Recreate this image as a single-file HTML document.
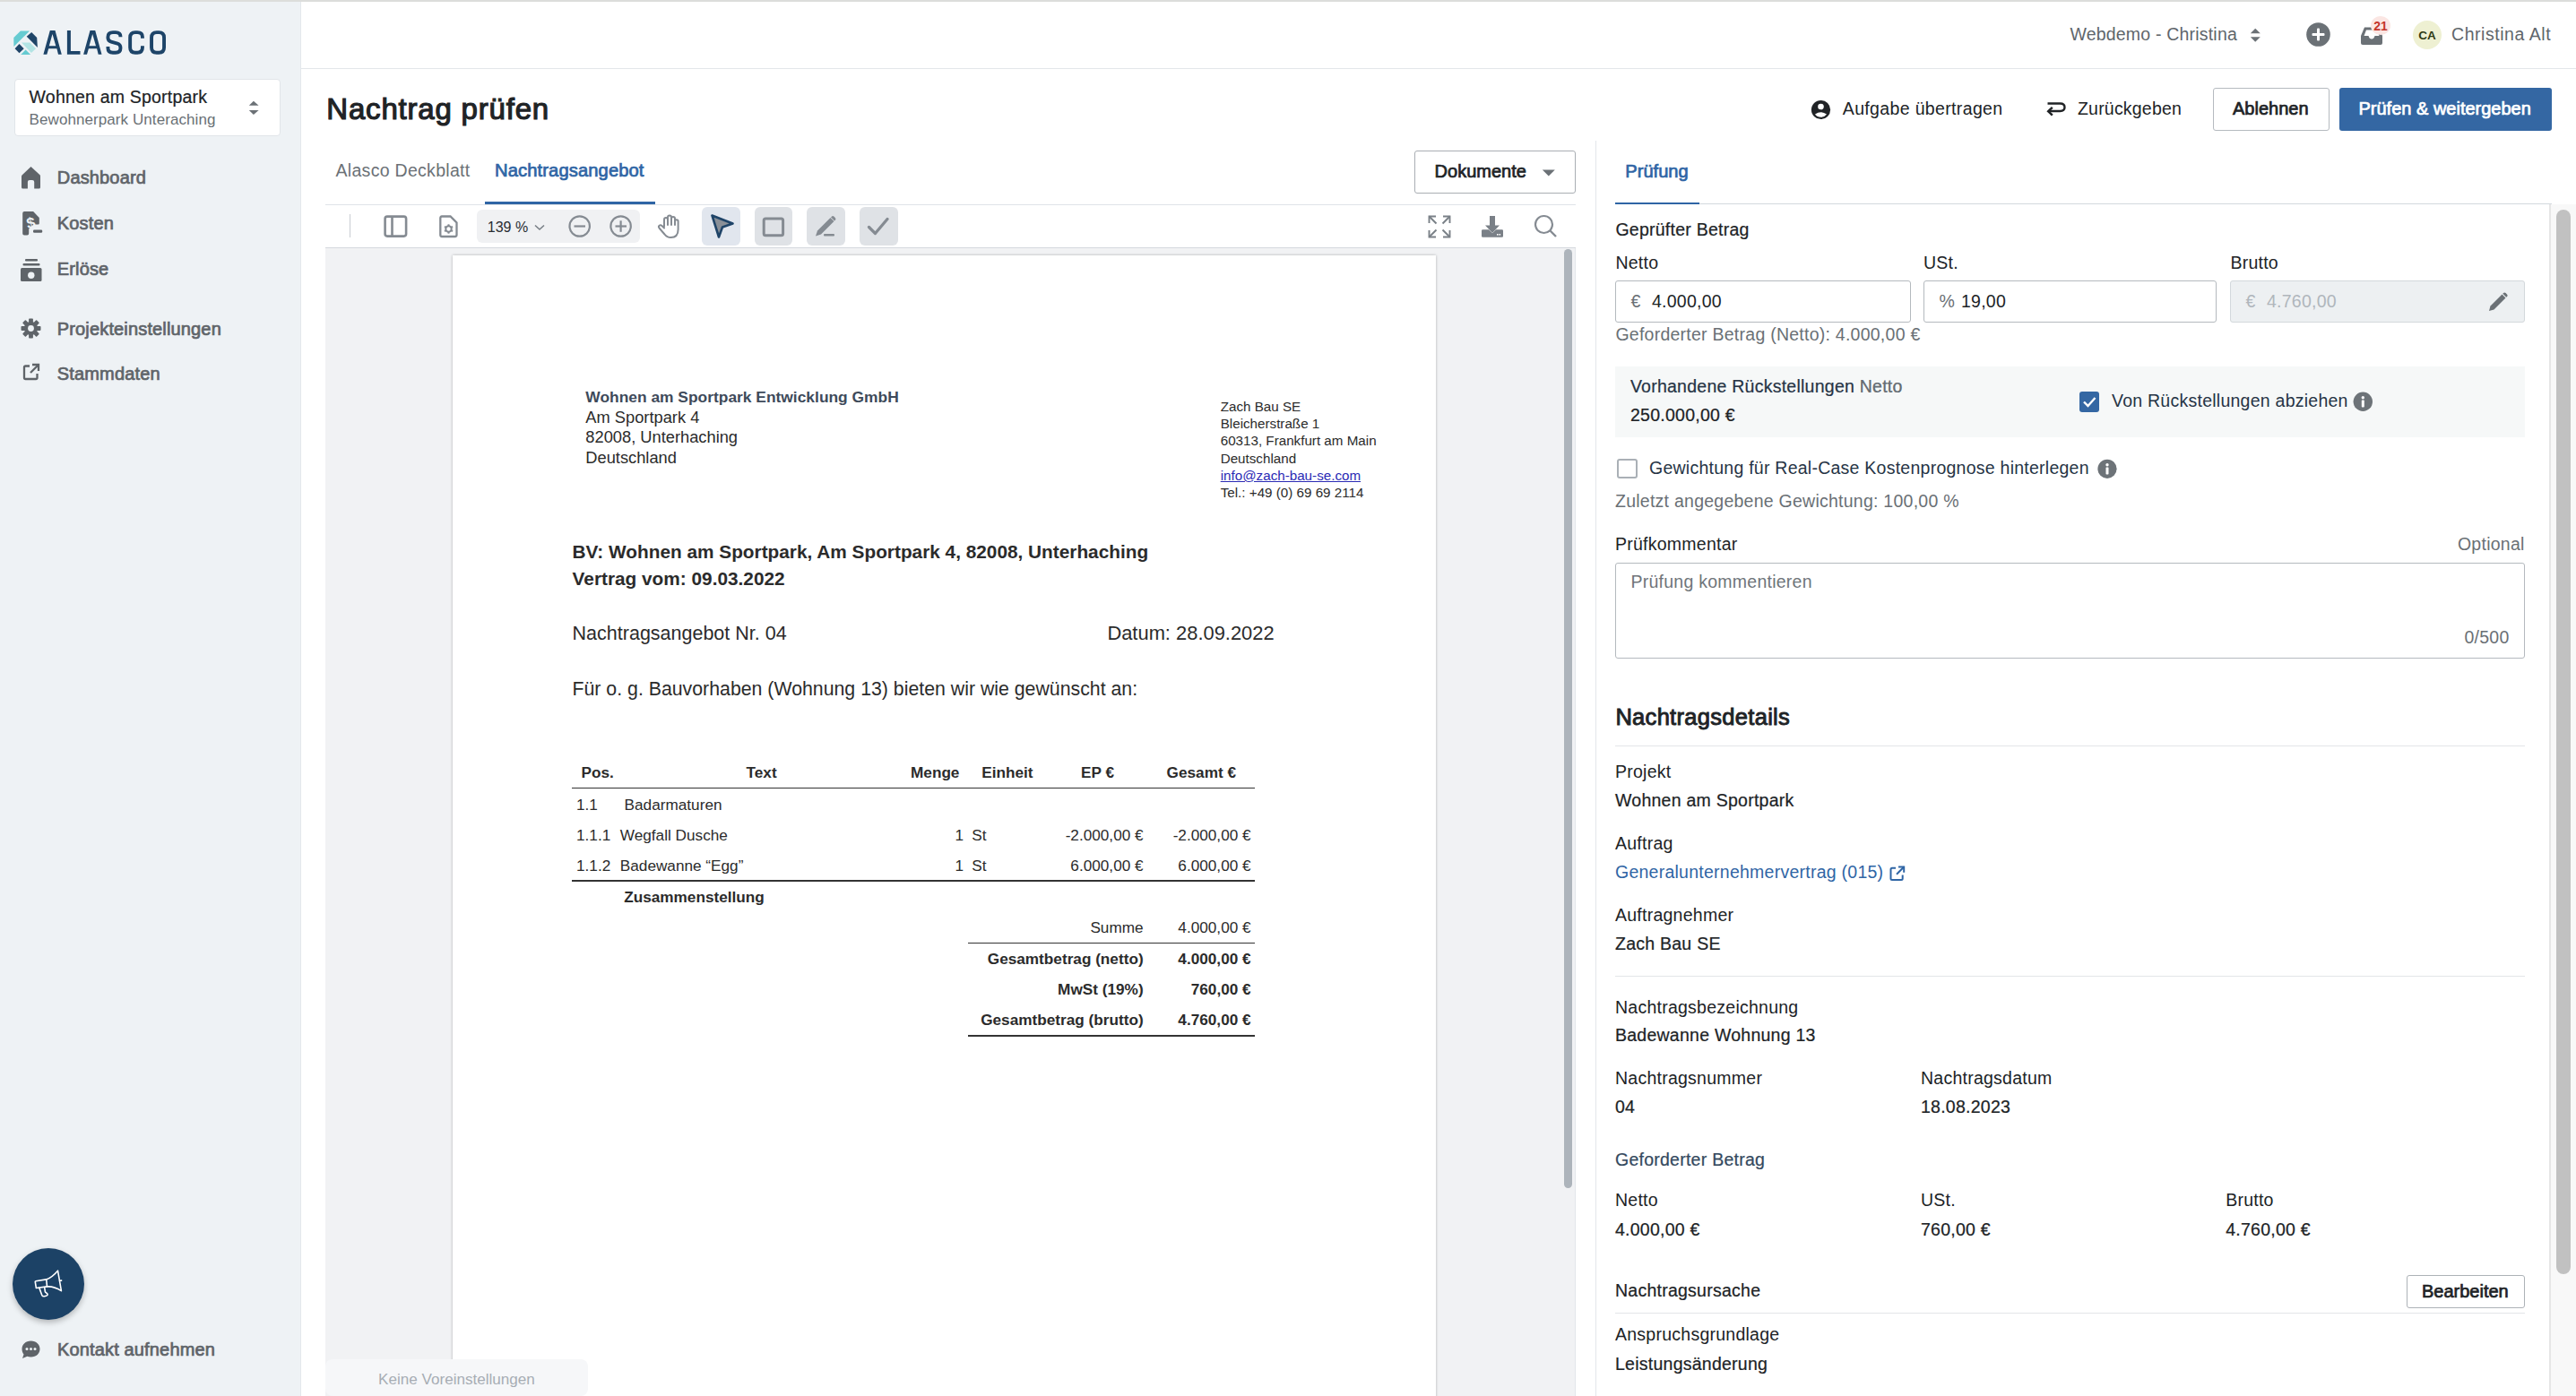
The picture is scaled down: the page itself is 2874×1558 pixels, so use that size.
<!DOCTYPE html>
<html><head><meta charset="utf-8"><title>Nachtrag prüfen</title>
<style>
html,body{margin:0;padding:0;}
html{overflow:hidden;}
body{width:2874px;height:1558px;position:relative;overflow:hidden;background:#ffffff;font-family:'Liberation Sans', sans-serif;}
.t{position:absolute;white-space:nowrap;line-height:1;}
svg{overflow:visible;}
</style></head><body>
<div style="position:absolute;left:0.00px;top:0.00px;width:2874.00px;height:2.00px;background:#dcdddb;border-radius:0px;"></div>
<div style="position:absolute;left:0.00px;top:2.00px;width:335.00px;height:1556.00px;background:#eef2f5;border-radius:0px;"></div>
<div style="position:absolute;left:335.00px;top:2.00px;width:1.00px;height:1556.00px;background:#e4e8ec;border-radius:0px;"></div>
<svg style="position:absolute;left:15.00px;top:33.70px;" width="28" height="28" viewBox="0 0 28 28">
<polygon points="7.9,0.4 18.1,0.4 0.4,18 0.3,7.9" fill="#66cbd1"/>
<polygon points="20.2,1.9 26.2,7.9 26.9,18.9 14.7,6.7" fill="#1f4568"/>
<polygon points="9,13.5 18.3,13.5 25.1,20.2 19.9,25.1" fill="#b3e4e4"/>
<polygon points="6.5,15 11.7,20.2 6.5,25.3 1.6,20.2" fill="#1f4568"/>
<polygon points="13.6,21.4 19.1,27.1 8.2,27.1" fill="#66cbd1"/>
</svg>
<svg style="position:absolute;left:0.00px;top:0.00px;" width="200" height="70" viewBox="0 0 200 70"><g fill="#1d4468">
<path fill-rule="evenodd" d="M48.4 60.7 L55.8 34.1 H61.5 L68.8 60.7 H65 L63.4 54.2 H54.2 L52.3 60.7 Z M54.8 51.2 H62.3 L58.5 37.9 Z"/>
<path d="M74.9 34.1 H78.9 V56.9 H89.5 V60.7 H74.9 Z"/>
<path fill-rule="evenodd" d="M93.1 60.7 L100.5 34.1 H106.2 L113.5 60.7 H109.7 L108.1 54.2 H98.9 L97 60.7 Z M99.5 51.2 H107 L103.2 37.9 Z"/></g>
<g fill="none" stroke="#1d4468" stroke-width="3.9">
<path d="M134.45 41.2 V40.8 Q134.45 36.15 129 36.15 H126 Q120.45 36.15 120.45 41.2 V42.2 Q120.45 45.6 124 46.6 L131 48.5 Q134.45 49.6 134.45 53.2 V53.8 Q134.45 58.75 129 58.75 H126 Q120.45 58.75 120.45 53.8 V52.1"/>
<path d="M158.95 42.7 V41.2 Q158.95 36.15 153.2 36.15 H150.9 Q145.15 36.15 145.15 41.9 V53 Q145.15 58.75 150.9 58.75 H153.2 Q158.95 58.75 158.95 53 V51.2"/>
<path d="M169.05 41.9 Q169.05 36.15 174.8 36.15 H177.3 Q183.05 36.15 183.05 41.9 V53 Q183.05 58.75 177.3 58.75 H174.8 Q169.05 58.75 169.05 53 Z"/></g></svg>
<div style="position:absolute;left:15.70px;top:88.00px;width:297.30px;height:64.20px;background:#ffffff;border:1px solid #e1e5e9;box-sizing:border-box;border-radius:4px;"></div>
<div class="t" style="left:32.60px;top:98.94px;font-size:19.5px;color:#202326;font-weight:400;letter-spacing:0.2px;font-family:'Liberation Sans', sans-serif;-webkit-text-stroke:0.22px #202326;">Wohnen am Sportpark</div>
<div class="t" style="left:32.60px;top:124.76px;font-size:17px;color:#6a7075;font-weight:400;letter-spacing:0.08px;font-family:'Liberation Sans', sans-serif;">Bewohnerpark Unteraching</div>
<svg style="position:absolute;left:277.00px;top:112.00px;" width="12" height="17" viewBox="0 0 12 17"><polygon points="0.8,5.8 5.9,0.8 11.6,5.8" fill="#6b7176"/><polygon points="0.8,10.9 11.6,10.9 5.9,16" fill="#6b7176"/></svg>
<div class="t" style="left:63.80px;top:188.02px;font-size:20px;color:#5f6469;font-weight:400;letter-spacing:0.15px;font-family:'Liberation Sans', sans-serif;-webkit-text-stroke:0.72px #5f6469;">Dashboard</div>
<div class="t" style="left:63.80px;top:238.52px;font-size:20px;color:#5f6469;font-weight:400;letter-spacing:0.15px;font-family:'Liberation Sans', sans-serif;-webkit-text-stroke:0.72px #5f6469;">Kosten</div>
<div class="t" style="left:63.80px;top:289.52px;font-size:20px;color:#5f6469;font-weight:400;letter-spacing:0.15px;font-family:'Liberation Sans', sans-serif;-webkit-text-stroke:0.72px #5f6469;">Erlöse</div>
<div class="t" style="left:63.80px;top:356.52px;font-size:20px;color:#5f6469;font-weight:400;letter-spacing:0.15px;font-family:'Liberation Sans', sans-serif;-webkit-text-stroke:0.72px #5f6469;">Projekteinstellungen</div>
<div class="t" style="left:63.80px;top:406.52px;font-size:20px;color:#5f6469;font-weight:400;letter-spacing:0.15px;font-family:'Liberation Sans', sans-serif;-webkit-text-stroke:0.72px #5f6469;">Stammdaten</div>
<svg style="position:absolute;left:23.00px;top:185.00px;" width="23" height="27" viewBox="0 0 23 27"><path d="M11.5 1 L21.8 10.5 Q22 11 22 12 V24 Q22 25.6 20.5 25.6 H15.2 V18 Q15.2 16 13 16 H10 Q7.9 16 7.9 18 V25.6 H2.5 Q1 25.6 1 24 V12 Q1 11 1.5 10.5 Z" fill="#5f6469"/></svg>
<svg style="position:absolute;left:18.00px;top:230.00px;" width="36" height="36" viewBox="0 0 36 36"><path d="M7.2 8.1 Q7.2 6.1 9.2 6.1 H19.1 L25.8 12.9 V19.3 Q25.8 20.6 24.5 20.6 H19.5 L14.2 25.5 V30.6 Q14.2 32.5 12.3 32.5 H9.1 Q7.2 32.5 7.2 30.6 Z" fill="#5f6469"/>
<rect x="19" y="26.6" width="10.2" height="3.1" rx="1.2" fill="#5f6469"/>
<text x="11.3" y="24.6" font-size="17" font-weight="700" fill="#eef2f5" font-family="Liberation Sans" transform="rotate(-12 16 17)">$</text></svg>
<svg style="position:absolute;left:22.00px;top:288.00px;" width="26" height="27" viewBox="0 0 26 27"><rect x="6" y="1" width="14" height="2.6" rx="1" fill="#5f6469"/>
<rect x="3.5" y="6" width="19" height="2.6" rx="1" fill="#5f6469"/>
<path d="M1 12.5 Q1 11 2.5 11 H23 Q24.5 11 24.5 12.5 V24.5 Q24.5 26 23 26 H2.5 Q1 26 1 24.5 Z" fill="#5f6469"/>
<circle cx="12.8" cy="19.2" r="3.7" fill="#eef2f5"/></svg>
<svg style="position:absolute;left:23.00px;top:355.00px;" width="23" height="23" viewBox="0 0 23 23"><g transform="translate(11.5,11.5)">
<circle r="7.6" fill="#5f6469"/>
<rect x="-2.4" y="-11" width="4.8" height="5" rx="0.8" fill="#5f6469" transform="rotate(0)"/><rect x="-2.4" y="-11" width="4.8" height="5" rx="0.8" fill="#5f6469" transform="rotate(45)"/><rect x="-2.4" y="-11" width="4.8" height="5" rx="0.8" fill="#5f6469" transform="rotate(90)"/><rect x="-2.4" y="-11" width="4.8" height="5" rx="0.8" fill="#5f6469" transform="rotate(135)"/><rect x="-2.4" y="-11" width="4.8" height="5" rx="0.8" fill="#5f6469" transform="rotate(180)"/><rect x="-2.4" y="-11" width="4.8" height="5" rx="0.8" fill="#5f6469" transform="rotate(225)"/><rect x="-2.4" y="-11" width="4.8" height="5" rx="0.8" fill="#5f6469" transform="rotate(270)"/><rect x="-2.4" y="-11" width="4.8" height="5" rx="0.8" fill="#5f6469" transform="rotate(315)"/>
<circle r="3.4" fill="#eef2f5"/></g></svg>
<svg style="position:absolute;left:25.00px;top:405.00px;" width="20" height="20" viewBox="0 0 20 20"><path d="M8 3.5 H3.5 Q2 3.5 2 5 V16.5 Q2 18 3.5 18 H15 Q16.5 18 16.5 16.5 V12" fill="none" stroke="#5f6469" stroke-width="2.3"/>
<path d="M11 2 H18 V9" fill="none" stroke="#5f6469" stroke-width="2.3"/><path d="M18 2 L9 11" stroke="#5f6469" stroke-width="2.3"/></svg>
<div style="position:absolute;left:14px;top:1393px;width:80px;height:80px;border-radius:50%;background:#1c4266;box-shadow:0 3px 6px rgba(0,0,0,0.25)"></div>
<svg style="position:absolute;left:36.00px;top:1414.00px;" width="36" height="36" viewBox="0 0 36 36"><g fill="none" stroke="#ffffff" stroke-width="1.6" stroke-linejoin="round" stroke-linecap="round">
<path d="M4.4 23.5 L3.3 16.8 Q3.1 15.9 4 15.8 L15.7 13.9 Q22 11.8 28.5 4.2 L32.4 26.6 Q24 21.3 16.5 21.9 Z"/><path d="M15.7 13.9 L16.5 21.9"/><path d="M7.8 23.4 L10.7 31.3 Q11.6 33.2 13.6 32.7 L16.2 31.9 Q17.6 31.2 16.8 29.9 L14.4 27.8 L13.7 22.9"/><path d="M30.6 15.3 L32.6 15.1"/></g></svg>
<svg style="position:absolute;left:23.00px;top:1495.00px;" width="23" height="22" viewBox="0 0 23 22"><path d="M11.5 1.5 C17.5 1.5 21.5 5.5 21.5 10.5 C21.5 15.5 17.5 19.5 11.5 19.5 C10 19.5 8.6 19.2 7.4 18.8 L2 21 L3.5 16.5 C2.2 14.9 1.5 12.8 1.5 10.5 C1.5 5.5 5.5 1.5 11.5 1.5 Z" fill="#5f6469"/><circle cx="7" cy="10.5" r="1.5" fill="#eef2f5"/><circle cx="11.5" cy="10.5" r="1.5" fill="#eef2f5"/><circle cx="16" cy="10.5" r="1.5" fill="#eef2f5"/></svg>
<div class="t" style="left:64.00px;top:1495.52px;font-size:20px;color:#5f6469;font-weight:400;letter-spacing:0.15px;font-family:'Liberation Sans', sans-serif;-webkit-text-stroke:0.72px #5f6469;">Kontakt aufnehmen</div>
<div style="position:absolute;left:336.00px;top:76.00px;width:2538.00px;height:1.00px;background:#e3e6ea;border-radius:0px;"></div>
<div class="t" style="left:2309.40px;top:28.94px;font-size:19.5px;color:#60666b;font-weight:400;letter-spacing:0.2px;font-family:'Liberation Sans', sans-serif;">Webdemo - Christina</div>
<svg style="position:absolute;left:2510.00px;top:31.00px;" width="13" height="17" viewBox="0 0 13 17"><polygon points="0.8,6.3 6.2,0.8 11.8,6.3" fill="#6b7176"/><polygon points="0.8,10.3 11.8,10.3 6.2,15.8" fill="#6b7176"/></svg>
<svg style="position:absolute;left:2573.00px;top:25.40px;" width="27" height="27" viewBox="0 0 27 27"><circle cx="13.5" cy="13.5" r="13.3" fill="#6b7176"/><rect x="12" y="6.5" width="3" height="14" rx="1" fill="#fff"/><rect x="6.5" y="12" width="14" height="3" rx="1" fill="#fff"/></svg>
<svg style="position:absolute;left:2633.00px;top:29.00px;" width="26" height="22" viewBox="0 0 26 22"><path d="M5 1.5 H21 L25 11 V19 Q25 21 23 21 H3 Q1 21 1 19 V11 Z" fill="#6b7176"/><path d="M4.5 11 L7 4.5 H19 L21.5 11 H16.5 Q15.5 14.5 13 14.5 Q10.5 14.5 9.5 11 Z" fill="#ffffff"/></svg>
<div style="position:absolute;left:2645px;top:18px;width:22px;height:21px;border-radius:50%;background:#fbe6e3"></div>
<div class="t" style="left:1906.00px;width:1500px;text-align:center;top:21.70px;font-size:14px;color:#c4352b;font-weight:700;letter-spacing:0px;font-family:'Liberation Sans', sans-serif;">21</div>
<div style="position:absolute;left:2692px;top:22.8px;width:32px;height:32px;border-radius:50%;background:#eef0d2"></div>
<div class="t" style="left:1958.00px;width:1500px;text-align:center;top:33.02px;font-size:13.5px;color:#2f3a12;font-weight:700;letter-spacing:0px;font-family:'Liberation Sans', sans-serif;">CA</div>
<div class="t" style="left:2735.00px;top:28.94px;font-size:19.5px;color:#60666b;font-weight:400;letter-spacing:0.55px;font-family:'Liberation Sans', sans-serif;">Christina Alt</div>
<div class="t" style="left:364.30px;top:105.31px;font-size:33px;color:#1f2326;font-weight:400;letter-spacing:0.8px;font-family:'Liberation Sans', sans-serif;-webkit-text-stroke:1.19px #1f2326;">Nachtrag prüfen</div>
<svg style="position:absolute;left:2020.00px;top:110.50px;" width="23" height="23" viewBox="0 0 23 23"><circle cx="11.5" cy="11.5" r="10.6" fill="#202326"/><circle cx="11.5" cy="8" r="3.3" fill="#fff"/><path d="M5 16.5 Q11.5 12 18 16.5 Q15.5 19.8 11.5 19.8 Q7.5 19.8 5 16.5 Z" fill="#fff"/></svg>
<div class="t" style="left:2055.80px;top:111.94px;font-size:19.5px;color:#202326;font-weight:400;letter-spacing:0.35px;font-family:'Liberation Sans', sans-serif;">Aufgabe übertragen</div>
<svg style="position:absolute;left:2282.00px;top:112.00px;" width="24" height="20" viewBox="0 0 24 20"><path d="M2.5 3.5 H16.5 Q21.5 3.5 21.5 7.8 Q21.5 12 16.5 12 H4" fill="none" stroke="#202326" stroke-width="2.4"/><path d="M7.8 7.8 L3.2 12.2 L7.8 16.6" fill="none" stroke="#202326" stroke-width="2.5"/></svg>
<div class="t" style="left:2318.00px;top:111.94px;font-size:19.5px;color:#202326;font-weight:400;letter-spacing:0.2px;font-family:'Liberation Sans', sans-serif;">Zurückgeben</div>
<div style="position:absolute;left:2468.50px;top:98.30px;width:130.50px;height:47.30px;background:#ffffff;border:1px solid #b5babf;box-sizing:border-box;border-radius:3px;"></div>
<div class="t" style="left:2491.00px;top:110.92px;font-size:20px;color:#202326;font-weight:400;letter-spacing:0px;font-family:'Liberation Sans', sans-serif;-webkit-text-stroke:0.72px #202326;">Ablehnen</div>
<div style="position:absolute;left:2610.00px;top:98.30px;width:237.00px;height:47.30px;background:#3467a3;border-radius:3px;"></div>
<div class="t" style="left:2631.50px;top:110.92px;font-size:20px;color:#ffffff;font-weight:400;letter-spacing:0px;font-family:'Liberation Sans', sans-serif;-webkit-text-stroke:0.72px #ffffff;">Prüfen &amp; weitergeben</div>
<div class="t" style="left:374.50px;top:180.94px;font-size:19.5px;color:#6b7176;font-weight:400;letter-spacing:0.3px;font-family:'Liberation Sans', sans-serif;">Alasco Deckblatt</div>
<div class="t" style="left:552.00px;top:180.35px;font-size:20.2px;color:#2f65a5;font-weight:400;letter-spacing:0.1px;font-family:'Liberation Sans', sans-serif;-webkit-text-stroke:0.73px #2f65a5;">Nachtragsangebot</div>
<div style="position:absolute;left:363.00px;top:228.00px;width:1395.00px;height:1.20px;background:#dfe3e8;border-radius:0px;"></div>
<div style="position:absolute;left:541.00px;top:225.40px;width:189.70px;height:2.60px;background:#2f65a5;border-radius:0px;"></div>
<div style="position:absolute;left:1578.20px;top:168.30px;width:179.60px;height:47.30px;background:#ffffff;border:1px solid #a9aeb3;box-sizing:border-box;border-radius:3px;"></div>
<div class="t" style="left:1600.60px;top:181.22px;font-size:20px;color:#202326;font-weight:400;letter-spacing:0px;font-family:'Liberation Sans', sans-serif;-webkit-text-stroke:0.72px #202326;">Dokumente</div>
<svg style="position:absolute;left:1720.00px;top:189.00px;" width="16" height="9" viewBox="0 0 16 9"><polygon points="0.8,0.6 14.8,0.6 7.8,7.6" fill="#6b7176"/></svg>
<div style="position:absolute;left:1780.00px;top:157.00px;width:1.00px;height:1401.00px;background:#e3e6ea;border-radius:0px;"></div>
<div style="position:absolute;left:363.00px;top:276.00px;width:1395.00px;height:1.20px;background:#d5d9de;border-radius:0px;"></div>
<div style="position:absolute;left:390.00px;top:239.00px;width:1.20px;height:26.40px;background:#c9cdd2;border-radius:0px;"></div>
<svg style="position:absolute;left:428.00px;top:240.00px;" width="27" height="26" viewBox="0 0 27 26"><rect x="1.6" y="1.6" width="23.5" height="22" rx="2.5" fill="none" stroke="#858b92" stroke-width="2.6"/><line x1="9.5" y1="1.6" x2="9.5" y2="23.6" stroke="#858b92" stroke-width="2.6"/></svg>
<svg style="position:absolute;left:490.00px;top:240.00px;" width="22" height="26" viewBox="0 0 22 26"><path d="M3 1.5 H12.5 L19.5 8.5 V22 Q19.5 24 17.5 24 H3 Q1.3 24 1.3 22 V3.5 Q1.3 1.5 3 1.5 Z" fill="none" stroke="#858b92" stroke-width="2.3"/><g transform="translate(10.5,15.5)"><circle r="3.2" fill="none" stroke="#858b92" stroke-width="2"/><rect x="-1" y="-5.2" width="2" height="2.5" fill="#858b92" transform="rotate(0)"/><rect x="-1" y="-5.2" width="2" height="2.5" fill="#858b92" transform="rotate(60)"/><rect x="-1" y="-5.2" width="2" height="2.5" fill="#858b92" transform="rotate(120)"/><rect x="-1" y="-5.2" width="2" height="2.5" fill="#858b92" transform="rotate(180)"/><rect x="-1" y="-5.2" width="2" height="2.5" fill="#858b92" transform="rotate(240)"/><rect x="-1" y="-5.2" width="2" height="2.5" fill="#858b92" transform="rotate(300)"/></g></svg>
<div style="position:absolute;left:532.00px;top:234.30px;width:181.60px;height:36.30px;background:#f0f1f3;border-radius:6px;"></div>
<div class="t" style="left:543.80px;top:245.90px;font-size:16px;color:#2a2e33;font-weight:400;letter-spacing:0px;font-family:'Liberation Sans', sans-serif;">139 %</div>
<svg style="position:absolute;left:596.00px;top:250.00px;" width="12" height="8" viewBox="0 0 12 8"><path d="M1 1.5 L6 6 L11 1.5" fill="none" stroke="#7a8087" stroke-width="1.6"/></svg>
<svg style="position:absolute;left:634.00px;top:240.00px;" width="26" height="26" viewBox="0 0 26 26"><circle cx="12.7" cy="12.5" r="11.2" fill="none" stroke="#858b92" stroke-width="2.2"/><line x1="6.5" y1="12.5" x2="19" y2="12.5" stroke="#858b92" stroke-width="2.2"/></svg>
<svg style="position:absolute;left:680.00px;top:240.00px;" width="26" height="26" viewBox="0 0 26 26"><circle cx="12.6" cy="12.5" r="11.2" fill="none" stroke="#858b92" stroke-width="2.2"/><line x1="6.5" y1="12.5" x2="19" y2="12.5" stroke="#858b92" stroke-width="2.2"/><line x1="12.6" y1="6.3" x2="12.6" y2="18.8" stroke="#858b92" stroke-width="2.2"/></svg>
<svg style="position:absolute;left:733.00px;top:239.00px;" width="26" height="28" viewBox="0 0 26 28"><path d="M8 14 V6 Q8 4 10 4 Q12 4 12 6 V12 V3.5 Q12 1.5 14 1.5 Q16 1.5 16 3.5 V12 V5 Q16 3 18 3 Q20 3 20 5 V12 V8 Q20 6.3 21.8 6.3 Q23.6 6.3 23.6 8 V17 Q23.6 26 15.5 26 Q11 26 8.5 22.5 L2.5 15.5 Q1.3 14 2.6 12.8 Q4 11.7 5.5 13 L8 15.5" fill="none" stroke="#858b92" stroke-width="2" stroke-linejoin="round" stroke-linecap="round"/></svg>
<div style="position:absolute;left:783.00px;top:231.00px;width:43.00px;height:42.60px;background:#e1e6ee;border-radius:6px;"></div>
<svg style="position:absolute;left:790.00px;top:237.00px;" width="30" height="30" viewBox="0 0 30 30"><path d="M4.5 3.5 L27.5 12.5 L16 16.5 L12 27.5 Z" fill="#8a9098" stroke="#1f4468" stroke-width="2.6" stroke-linejoin="round"/></svg>
<div style="position:absolute;left:842.00px;top:231.00px;width:41.80px;height:42.60px;background:#dfe2e6;border-radius:6px;"></div>
<svg style="position:absolute;left:850.00px;top:241.50px;" width="26" height="23" viewBox="0 0 26 23"><rect x="2.2" y="2" width="21.4" height="18.8" rx="2" fill="none" stroke="#858b92" stroke-width="3"/></svg>
<div style="position:absolute;left:900.00px;top:231.00px;width:42.80px;height:42.60px;background:#dfe2e6;border-radius:6px;"></div>
<svg style="position:absolute;left:908.00px;top:239.00px;" width="26" height="28" viewBox="0 0 26 28"><path d="M2 24.5 L4 18.5 L18.5 4 L22.5 8 L8 22.5 Z" fill="#858b92"/><path d="M19.8 2.7 Q21.2 1.3 22.6 2.7 L23.8 3.9 Q25.2 5.3 23.8 6.7 L23 7.5 L19 3.5 Z" fill="#858b92"/><rect x="11" y="22" width="12" height="2.6" rx="1" fill="#858b92"/></svg>
<div style="position:absolute;left:959.00px;top:231.00px;width:42.60px;height:42.60px;background:#dfe2e6;border-radius:6px;"></div>
<svg style="position:absolute;left:967.00px;top:240.00px;" width="26" height="26" viewBox="0 0 26 26"><path d="M2.5 13.5 L9.5 20.5 L23 4.5" fill="none" stroke="#858b92" stroke-width="3.2" stroke-linecap="round" stroke-linejoin="round"/></svg>
<svg style="position:absolute;left:1593.00px;top:240.00px;" width="26" height="26" viewBox="0 0 26 26"><g stroke="#7a8087" stroke-width="1.9" fill="none"><path d="M1.5 9 V1.5 H9"/><path d="M1.5 1.5 L9.5 9.5"/><path d="M17 1.5 H24.5 V9"/><path d="M24.5 1.5 L16.5 9.5"/><path d="M1.5 17 V24.5 H9"/><path d="M1.5 24.5 L9.5 16.5"/><path d="M24.5 17 V24.5 H17"/><path d="M24.5 24.5 L16.5 16.5"/></g></svg>
<svg style="position:absolute;left:1652.00px;top:240.00px;" width="26" height="26" viewBox="0 0 26 26"><rect x="10" y="1" width="6" height="11" fill="#7a8087"/><polygon points="5,11.5 21,11.5 13,20" fill="#7a8087"/><path d="M1 17.5 Q1 16.3 2.2 16.3 H9 L13 20.3 L17 16.3 H23.8 Q25 16.3 25 17.5 V23.5 Q25 24.7 23.8 24.7 H2.2 Q1 24.7 1 23.5 Z" fill="#7a8087"/><rect x="18" y="21" width="1.6" height="1.6" fill="#fff"/><rect x="20.5" y="21" width="1.6" height="1.6" fill="#fff"/></svg>
<svg style="position:absolute;left:1711.00px;top:239.00px;" width="27" height="28" viewBox="0 0 27 28"><circle cx="11.5" cy="11.5" r="9.5" fill="none" stroke="#858b92" stroke-width="2.2"/><line x1="18.5" y1="18.5" x2="25" y2="25" stroke="#858b92" stroke-width="2.4"/></svg>
<div style="position:absolute;left:363.00px;top:277.20px;width:1395.00px;height:1280.80px;background:#f1f2f4;border-radius:0px;"></div>
<div style="position:absolute;left:504.50px;top:284.80px;width:1097.30px;height:1315.20px;background:#ffffff;border-radius:0px;box-shadow:0 0 3px rgba(0,0,0,0.28);"></div>
<div style="position:absolute;left:1745.00px;top:277.50px;width:9.20px;height:1048.70px;background:#adb4bb;border-radius:5px;"></div>
<div style="position:absolute;left:1757.00px;top:277.20px;width:1.00px;height:1280.80px;background:#e3e6ea;border-radius:0px;"></div>
<div style="position:absolute;left:363px;top:1517px;width:293px;height:41px;background:#f6f7f9;border-radius:8px"></div>
<div class="t" style="left:422.00px;top:1530.97px;font-size:17.1px;color:#a7adb4;font-weight:400;letter-spacing:0px;font-family:'Liberation Sans', sans-serif;">Keine Voreinstellungen</div>
<div class="t" style="left:653.30px;top:435.12px;font-size:17.4px;color:#3e4a5a;font-weight:700;letter-spacing:0px;font-family:'Liberation Sans', sans-serif;">Wohnen am Sportpark Entwicklung GmbH</div>
<div class="t" style="left:653.30px;top:457.16px;font-size:18.3px;color:#2b2b2b;font-weight:400;letter-spacing:0px;font-family:'Liberation Sans', sans-serif;">Am Sportpark 4</div>
<div class="t" style="left:653.30px;top:479.26px;font-size:18.3px;color:#2b2b2b;font-weight:400;letter-spacing:0px;font-family:'Liberation Sans', sans-serif;">82008, Unterhaching</div>
<div class="t" style="left:653.30px;top:501.96px;font-size:18.3px;color:#2b2b2b;font-weight:400;letter-spacing:0px;font-family:'Liberation Sans', sans-serif;">Deutschland</div>
<div class="t" style="left:1361.70px;top:446.08px;font-size:15.2px;color:#2b2b2b;font-weight:400;letter-spacing:0px;font-family:'Liberation Sans', sans-serif;">Zach Bau SE</div>
<div class="t" style="left:1361.70px;top:465.08px;font-size:15.2px;color:#2b2b2b;font-weight:400;letter-spacing:0px;font-family:'Liberation Sans', sans-serif;">Bleicherstraße 1</div>
<div class="t" style="left:1361.70px;top:484.38px;font-size:15.2px;color:#2b2b2b;font-weight:400;letter-spacing:0px;font-family:'Liberation Sans', sans-serif;">60313, Frankfurt am Main</div>
<div class="t" style="left:1361.70px;top:503.58px;font-size:15.2px;color:#2b2b2b;font-weight:400;letter-spacing:0px;font-family:'Liberation Sans', sans-serif;">Deutschland</div>
<div class="t" style="left:1361.70px;top:522.88px;font-size:15.2px;color:#2b2bb5;font-weight:400;letter-spacing:0px;font-family:'Liberation Sans', sans-serif;text-decoration:underline;">info@zach-bau-se.com</div>
<div class="t" style="left:1361.70px;top:541.58px;font-size:15.2px;color:#2b2b2b;font-weight:400;letter-spacing:0px;font-family:'Liberation Sans', sans-serif;">Tel.: +49 (0) 69 69 2114</div>
<div class="t" style="left:638.60px;top:605.94px;font-size:20.8px;color:#2b2b2b;font-weight:700;letter-spacing:0px;font-family:'Liberation Sans', sans-serif;">BV: Wohnen am Sportpark, Am Sportpark 4, 82008, Unterhaching</div>
<div class="t" style="left:638.60px;top:636.24px;font-size:20.8px;color:#2b2b2b;font-weight:700;letter-spacing:0px;font-family:'Liberation Sans', sans-serif;">Vertrag vom: 09.03.2022</div>
<div class="t" style="left:638.60px;top:697.25px;font-size:21.5px;color:#2b2b2b;font-weight:400;letter-spacing:0px;font-family:'Liberation Sans', sans-serif;">Nachtragsangebot Nr. 04</div>
<div class="t" style="left:1235.40px;top:695.91px;font-size:21.9px;color:#2b2b2b;font-weight:400;letter-spacing:0px;font-family:'Liberation Sans', sans-serif;">Datum: 28.09.2022</div>
<div class="t" style="left:638.50px;top:758.52px;font-size:21.3px;color:#2b2b2b;font-weight:400;letter-spacing:0px;font-family:'Liberation Sans', sans-serif;">Für o. g. Bauvorhaben (Wohnung 13) bieten wir wie gewünscht an:</div>
<div class="t" style="left:648.50px;top:853.69px;font-size:17.2px;color:#2b2b2b;font-weight:700;letter-spacing:0px;font-family:'Liberation Sans', sans-serif;">Pos.</div>
<div class="t" style="left:832.60px;top:853.69px;font-size:17.2px;color:#2b2b2b;font-weight:700;letter-spacing:0px;font-family:'Liberation Sans', sans-serif;">Text</div>
<div class="t" style="left:1016.00px;top:853.69px;font-size:17.2px;color:#2b2b2b;font-weight:700;letter-spacing:0px;font-family:'Liberation Sans', sans-serif;">Menge</div>
<div class="t" style="left:1095.30px;top:853.69px;font-size:17.2px;color:#2b2b2b;font-weight:700;letter-spacing:0px;font-family:'Liberation Sans', sans-serif;">Einheit</div>
<div class="t" style="left:1206.00px;top:853.69px;font-size:17.2px;color:#2b2b2b;font-weight:700;letter-spacing:0px;font-family:'Liberation Sans', sans-serif;">EP €</div>
<div class="t" style="left:1301.60px;top:853.69px;font-size:17.2px;color:#2b2b2b;font-weight:700;letter-spacing:0px;font-family:'Liberation Sans', sans-serif;">Gesamt €</div>
<div style="position:absolute;left:637.60px;top:878.60px;width:762.40px;height:1.60px;background:#333333;border-radius:0px;"></div>
<div class="t" style="left:643.00px;top:889.89px;font-size:17.2px;color:#2b2b2b;font-weight:400;letter-spacing:0px;font-family:'Liberation Sans', sans-serif;">1.1</div>
<div class="t" style="left:696.60px;top:889.89px;font-size:17.2px;color:#2b2b2b;font-weight:400;letter-spacing:0px;font-family:'Liberation Sans', sans-serif;">Badarmaturen</div>
<div class="t" style="left:643.00px;top:923.89px;font-size:17.2px;color:#2b2b2b;font-weight:400;letter-spacing:0px;font-family:'Liberation Sans', sans-serif;">1.1.1</div>
<div class="t" style="left:691.80px;top:923.89px;font-size:17.2px;color:#2b2b2b;font-weight:400;letter-spacing:0px;font-family:'Liberation Sans', sans-serif;">Wegfall Dusche</div>
<div class="t" style="left:-425.00px;width:1500px;text-align:right;top:923.89px;font-size:17.2px;color:#2b2b2b;font-weight:400;letter-spacing:0px;font-family:'Liberation Sans', sans-serif;">1</div>
<div class="t" style="left:1084.30px;top:923.89px;font-size:17.2px;color:#2b2b2b;font-weight:400;letter-spacing:0px;font-family:'Liberation Sans', sans-serif;">St</div>
<div class="t" style="left:-224.40px;width:1500px;text-align:right;top:923.89px;font-size:17.2px;color:#2b2b2b;font-weight:400;letter-spacing:0px;font-family:'Liberation Sans', sans-serif;">-2.000,00 €</div>
<div class="t" style="left:-104.40px;width:1500px;text-align:right;top:923.89px;font-size:17.2px;color:#2b2b2b;font-weight:400;letter-spacing:0px;font-family:'Liberation Sans', sans-serif;">-2.000,00 €</div>
<div class="t" style="left:643.00px;top:957.89px;font-size:17.2px;color:#2b2b2b;font-weight:400;letter-spacing:0px;font-family:'Liberation Sans', sans-serif;">1.1.2</div>
<div class="t" style="left:691.80px;top:957.89px;font-size:17.2px;color:#2b2b2b;font-weight:400;letter-spacing:0px;font-family:'Liberation Sans', sans-serif;">Badewanne “Egg”</div>
<div class="t" style="left:-425.00px;width:1500px;text-align:right;top:957.89px;font-size:17.2px;color:#2b2b2b;font-weight:400;letter-spacing:0px;font-family:'Liberation Sans', sans-serif;">1</div>
<div class="t" style="left:1084.30px;top:957.89px;font-size:17.2px;color:#2b2b2b;font-weight:400;letter-spacing:0px;font-family:'Liberation Sans', sans-serif;">St</div>
<div class="t" style="left:-224.40px;width:1500px;text-align:right;top:957.89px;font-size:17.2px;color:#2b2b2b;font-weight:400;letter-spacing:0px;font-family:'Liberation Sans', sans-serif;">6.000,00 €</div>
<div class="t" style="left:-104.40px;width:1500px;text-align:right;top:957.89px;font-size:17.2px;color:#2b2b2b;font-weight:400;letter-spacing:0px;font-family:'Liberation Sans', sans-serif;">6.000,00 €</div>
<div style="position:absolute;left:637.60px;top:982.00px;width:762.40px;height:1.60px;background:#333333;border-radius:0px;"></div>
<div class="t" style="left:696.20px;top:993.19px;font-size:17.2px;color:#2b2b2b;font-weight:700;letter-spacing:0px;font-family:'Liberation Sans', sans-serif;">Zusammenstellung</div>
<div class="t" style="left:-224.40px;width:1500px;text-align:right;top:1026.59px;font-size:17.2px;color:#2b2b2b;font-weight:400;letter-spacing:0px;font-family:'Liberation Sans', sans-serif;">Summe</div>
<div class="t" style="left:-104.40px;width:1500px;text-align:right;top:1026.59px;font-size:17.2px;color:#2b2b2b;font-weight:400;letter-spacing:0px;font-family:'Liberation Sans', sans-serif;">4.000,00 €</div>
<div style="position:absolute;left:1080.00px;top:1051.70px;width:320.00px;height:1.60px;background:#333333;border-radius:0px;"></div>
<div class="t" style="left:-224.40px;width:1500px;text-align:right;top:1062.39px;font-size:17.2px;color:#2b2b2b;font-weight:700;letter-spacing:0px;font-family:'Liberation Sans', sans-serif;">Gesamtbetrag (netto)</div>
<div class="t" style="left:-104.40px;width:1500px;text-align:right;top:1062.39px;font-size:17.2px;color:#2b2b2b;font-weight:700;letter-spacing:0px;font-family:'Liberation Sans', sans-serif;">4.000,00 €</div>
<div class="t" style="left:-224.40px;width:1500px;text-align:right;top:1095.89px;font-size:17.2px;color:#2b2b2b;font-weight:700;letter-spacing:0px;font-family:'Liberation Sans', sans-serif;">MwSt (19%)</div>
<div class="t" style="left:-104.40px;width:1500px;text-align:right;top:1095.89px;font-size:17.2px;color:#2b2b2b;font-weight:700;letter-spacing:0px;font-family:'Liberation Sans', sans-serif;">760,00 €</div>
<div class="t" style="left:-224.40px;width:1500px;text-align:right;top:1130.09px;font-size:17.2px;color:#2b2b2b;font-weight:700;letter-spacing:0px;font-family:'Liberation Sans', sans-serif;">Gesamtbetrag (brutto)</div>
<div class="t" style="left:-104.40px;width:1500px;text-align:right;top:1130.09px;font-size:17.2px;color:#2b2b2b;font-weight:700;letter-spacing:0px;font-family:'Liberation Sans', sans-serif;">4.760,00 €</div>
<div style="position:absolute;left:1080.00px;top:1155.00px;width:320.00px;height:1.60px;background:#333333;border-radius:0px;"></div>
<div class="t" style="left:1813.30px;top:180.63px;font-size:20.1px;color:#2f65a5;font-weight:400;letter-spacing:0px;font-family:'Liberation Sans', sans-serif;-webkit-text-stroke:0.72px #2f65a5;">Prüfung</div>
<div style="position:absolute;left:1802.00px;top:226.60px;width:1045.00px;height:1.60px;background:#d3d9de;border-radius:0px;"></div>
<div style="position:absolute;left:1802.00px;top:225.50px;width:94.00px;height:2.80px;background:#2f65a5;border-radius:0px;"></div>
<div style="position:absolute;left:2844.40px;top:228.20px;width:29.60px;height:1329.80px;background:#f8f8f8;border-radius:0px;"></div>
<div style="position:absolute;left:2844.40px;top:228.20px;width:1.20px;height:1329.80px;background:#e6e6e6;border-radius:0px;"></div>
<div style="position:absolute;left:2852.00px;top:233.80px;width:16.00px;height:1188.00px;background:#c1c1c1;border-radius:8px;"></div>
<div class="t" style="left:1802.40px;top:246.94px;font-size:19.5px;color:#202326;font-weight:400;letter-spacing:0.25px;font-family:'Liberation Sans', sans-serif;-webkit-text-stroke:0.22px #202326;">Geprüfter Betrag</div>
<div class="t" style="left:1802.40px;top:283.94px;font-size:19.5px;color:#202326;font-weight:400;letter-spacing:0.25px;font-family:'Liberation Sans', sans-serif;">Netto</div>
<div class="t" style="left:2146.00px;top:283.94px;font-size:19.5px;color:#202326;font-weight:400;letter-spacing:0.25px;font-family:'Liberation Sans', sans-serif;">USt.</div>
<div class="t" style="left:2488.40px;top:283.94px;font-size:19.5px;color:#202326;font-weight:400;letter-spacing:0.25px;font-family:'Liberation Sans', sans-serif;">Brutto</div>
<div style="position:absolute;left:1802.40px;top:313.30px;width:329.30px;height:47.00px;background:#ffffff;border:1px solid #b4b9be;box-sizing:border-box;border-radius:3px;"></div>
<div class="t" style="left:1819.50px;top:327.14px;font-size:19.5px;color:#6a7075;font-weight:400;letter-spacing:0px;font-family:'Liberation Sans', sans-serif;">€</div>
<div class="t" style="left:1843.00px;top:327.14px;font-size:19.5px;color:#202326;font-weight:400;letter-spacing:0.25px;font-family:'Liberation Sans', sans-serif;">4.000,00</div>
<div style="position:absolute;left:2145.60px;top:313.30px;width:327.90px;height:47.00px;background:#ffffff;border:1px solid #b4b9be;box-sizing:border-box;border-radius:3px;"></div>
<div class="t" style="left:2163.50px;top:327.14px;font-size:19.5px;color:#6a7075;font-weight:400;letter-spacing:0px;font-family:'Liberation Sans', sans-serif;">%</div>
<div class="t" style="left:2188.00px;top:327.14px;font-size:19.5px;color:#202326;font-weight:400;letter-spacing:0.25px;font-family:'Liberation Sans', sans-serif;">19,00</div>
<div style="position:absolute;left:2488.40px;top:313.30px;width:328.20px;height:47.00px;background:#edf0f2;border:1px solid #d3d8dc;box-sizing:border-box;border-radius:3px;"></div>
<div class="t" style="left:2505.50px;top:327.14px;font-size:19.5px;color:#b0b6bc;font-weight:400;letter-spacing:0px;font-family:'Liberation Sans', sans-serif;">€</div>
<div class="t" style="left:2529.00px;top:327.14px;font-size:19.5px;color:#b0b6bc;font-weight:400;letter-spacing:0.25px;font-family:'Liberation Sans', sans-serif;">4.760,00</div>
<svg style="position:absolute;left:2775.00px;top:325.00px;" width="24" height="24" viewBox="0 0 24 24"><path d="M2 22 L3.5 16.5 L16.5 3.5 L20.5 7.5 L7.5 20.5 Z" fill="#6b7176"/><path d="M18 2 Q19.3 0.8 20.6 2 L22 3.4 Q23.2 4.7 22 6 L21.3 6.7 L17.3 2.7 Z" fill="#6b7176"/></svg>
<div class="t" style="left:1802.40px;top:363.94px;font-size:19.5px;color:#6a7075;font-weight:400;letter-spacing:0.25px;font-family:'Liberation Sans', sans-serif;">Geforderter Betrag (Netto): 4.000,00 €</div>
<div style="position:absolute;left:1802.00px;top:409.40px;width:1014.80px;height:78.60px;background:#f6f8f8;border-radius:0px;"></div>
<div class="t" style="left:1818.90px;top:422.24px;font-size:19.5px;color:#263445;font-weight:400;letter-spacing:0.25px;font-family:'Liberation Sans', sans-serif;-webkit-text-stroke:0.22px #263445;">Vorhandene Rückstellungen <span style="color:#6a7075">Netto</span></div>
<div class="t" style="left:1819.00px;top:454.34px;font-size:19.5px;color:#202326;font-weight:400;letter-spacing:0.25px;font-family:'Liberation Sans', sans-serif;-webkit-text-stroke:0.22px #202326;">250.000,00 €</div>
<div style="position:absolute;left:2320.00px;top:437.00px;width:22.00px;height:23.00px;background:#3467a3;border-radius:3px;"></div>
<svg style="position:absolute;left:2320.00px;top:437.00px;" width="22" height="23" viewBox="0 0 22 23"><path d="M5 11.5 L9.5 16 L17.5 7" fill="none" stroke="#fff" stroke-width="2.4"/></svg>
<div class="t" style="left:2356.00px;top:438.14px;font-size:19.5px;color:#263445;font-weight:400;letter-spacing:0.25px;font-family:'Liberation Sans', sans-serif;">Von Rückstellungen abziehen</div>
<svg style="position:absolute;left:2625.00px;top:437.00px;" width="23" height="23" viewBox="0 0 23 23"><circle cx="11.3" cy="11.3" r="10.7" fill="#6d7378"/><circle cx="11.3" cy="6.8" r="1.7" fill="#fff"/><rect x="9.8" y="9.6" width="3" height="8" rx="0.8" fill="#fff"/></svg>
<div style="position:absolute;left:1804.00px;top:512.00px;width:23.00px;height:21.80px;background:#ffffff;border:2px solid #aab0b6;box-sizing:border-box;border-radius:3px;"></div>
<div class="t" style="left:1840.00px;top:512.94px;font-size:19.5px;color:#263445;font-weight:400;letter-spacing:0.25px;font-family:'Liberation Sans', sans-serif;">Gewichtung für Real-Case Kostenprognose hinterlegen</div>
<svg style="position:absolute;left:2339.50px;top:512.00px;" width="23" height="23" viewBox="0 0 23 23"><circle cx="11" cy="11.3" r="10.6" fill="#6d7378"/><circle cx="11" cy="6.8" r="1.7" fill="#fff"/><rect x="9.5" y="9.6" width="3" height="8" rx="0.8" fill="#fff"/></svg>
<div class="t" style="left:1802.00px;top:549.74px;font-size:19.5px;color:#6a7075;font-weight:400;letter-spacing:0.25px;font-family:'Liberation Sans', sans-serif;">Zuletzt angegebene Gewichtung: 100,00 %</div>
<div class="t" style="left:1802.00px;top:598.24px;font-size:19.5px;color:#202326;font-weight:400;letter-spacing:0.25px;font-family:'Liberation Sans', sans-serif;">Prüfkommentar</div>
<div class="t" style="left:1316.60px;width:1500px;text-align:right;top:598.24px;font-size:19.5px;color:#6a7075;font-weight:400;letter-spacing:0.25px;font-family:'Liberation Sans', sans-serif;">Optional</div>
<div style="position:absolute;left:1802.00px;top:627.70px;width:1014.60px;height:107.80px;background:#ffffff;border:1px solid #b4b9be;box-sizing:border-box;border-radius:3px;"></div>
<div class="t" style="left:1819.50px;top:639.94px;font-size:19.5px;color:#6f757a;font-weight:400;letter-spacing:0.25px;font-family:'Liberation Sans', sans-serif;">Prüfung kommentieren</div>
<div class="t" style="left:1299.50px;width:1500px;text-align:right;top:702.44px;font-size:19.5px;color:#6a7075;font-weight:400;letter-spacing:0.25px;font-family:'Liberation Sans', sans-serif;">0/500</div>
<div class="t" style="left:1802.40px;top:787.56px;font-size:25.5px;color:#202326;font-weight:400;letter-spacing:0.3px;font-family:'Liberation Sans', sans-serif;-webkit-text-stroke:0.92px #202326;">Nachtragsdetails</div>
<div style="position:absolute;left:1802.00px;top:831.60px;width:1015.00px;height:1.20px;background:#e3e5e8;border-radius:0px;"></div>
<div class="t" style="left:1802.00px;top:851.94px;font-size:19.5px;color:#202326;font-weight:400;letter-spacing:0.25px;font-family:'Liberation Sans', sans-serif;">Projekt</div>
<div class="t" style="left:1802.00px;top:884.24px;font-size:19.5px;color:#202326;font-weight:400;letter-spacing:0.25px;font-family:'Liberation Sans', sans-serif;-webkit-text-stroke:0.22px #202326;">Wohnen am Sportpark</div>
<div class="t" style="left:1802.00px;top:932.24px;font-size:19.5px;color:#202326;font-weight:400;letter-spacing:0.25px;font-family:'Liberation Sans', sans-serif;">Auftrag</div>
<div class="t" style="left:1802.00px;top:963.94px;font-size:19.5px;color:#2f65a5;font-weight:400;letter-spacing:0.25px;font-family:'Liberation Sans', sans-serif;">Generalunternehmervertrag (015)</div>
<svg style="position:absolute;left:2108.00px;top:965.50px;" width="18" height="18" viewBox="0 0 18 18"><path d="M7 2.8 H3 Q1.5 2.8 1.5 4.3 V14.5 Q1.5 16 3 16 H13.2 Q14.7 16 14.7 14.5 V10.5" fill="none" stroke="#2f65a5" stroke-width="2"/><path d="M10 1.5 H16.2 V7.7" fill="none" stroke="#2f65a5" stroke-width="2"/><path d="M16.2 1.5 L8 9.7" stroke="#2f65a5" stroke-width="2"/></svg>
<div class="t" style="left:1802.00px;top:1011.94px;font-size:19.5px;color:#202326;font-weight:400;letter-spacing:0.25px;font-family:'Liberation Sans', sans-serif;">Auftragnehmer</div>
<div class="t" style="left:1802.00px;top:1043.94px;font-size:19.5px;color:#202326;font-weight:400;letter-spacing:0.25px;font-family:'Liberation Sans', sans-serif;-webkit-text-stroke:0.22px #202326;">Zach Bau SE</div>
<div style="position:absolute;left:1802.00px;top:1088.70px;width:1015.00px;height:1.20px;background:#e3e5e8;border-radius:0px;"></div>
<div class="t" style="left:1802.00px;top:1114.84px;font-size:19.5px;color:#202326;font-weight:400;letter-spacing:0.25px;font-family:'Liberation Sans', sans-serif;">Nachtragsbezeichnung</div>
<div class="t" style="left:1802.00px;top:1145.94px;font-size:19.5px;color:#202326;font-weight:400;letter-spacing:0.25px;font-family:'Liberation Sans', sans-serif;-webkit-text-stroke:0.22px #202326;">Badewanne Wohnung 13</div>
<div class="t" style="left:1802.00px;top:1193.94px;font-size:19.5px;color:#202326;font-weight:400;letter-spacing:0.25px;font-family:'Liberation Sans', sans-serif;">Nachtragsnummer</div>
<div class="t" style="left:2143.00px;top:1193.94px;font-size:19.5px;color:#202326;font-weight:400;letter-spacing:0.25px;font-family:'Liberation Sans', sans-serif;">Nachtragsdatum</div>
<div class="t" style="left:1802.00px;top:1226.44px;font-size:19.5px;color:#202326;font-weight:400;letter-spacing:0.25px;font-family:'Liberation Sans', sans-serif;-webkit-text-stroke:0.22px #202326;">04</div>
<div class="t" style="left:2143.00px;top:1226.44px;font-size:19.5px;color:#202326;font-weight:400;letter-spacing:0.25px;font-family:'Liberation Sans', sans-serif;-webkit-text-stroke:0.22px #202326;">18.08.2023</div>
<div class="t" style="left:1802.00px;top:1284.94px;font-size:19.5px;color:#34495e;font-weight:400;letter-spacing:0.25px;font-family:'Liberation Sans', sans-serif;-webkit-text-stroke:0.22px #34495e;">Geforderter Betrag</div>
<div class="t" style="left:1802.00px;top:1330.34px;font-size:19.5px;color:#202326;font-weight:400;letter-spacing:0.25px;font-family:'Liberation Sans', sans-serif;">Netto</div>
<div class="t" style="left:2143.00px;top:1330.34px;font-size:19.5px;color:#202326;font-weight:400;letter-spacing:0.25px;font-family:'Liberation Sans', sans-serif;">USt.</div>
<div class="t" style="left:2483.20px;top:1330.34px;font-size:19.5px;color:#202326;font-weight:400;letter-spacing:0.25px;font-family:'Liberation Sans', sans-serif;">Brutto</div>
<div class="t" style="left:1802.00px;top:1362.54px;font-size:19.5px;color:#202326;font-weight:400;letter-spacing:0.25px;font-family:'Liberation Sans', sans-serif;-webkit-text-stroke:0.22px #202326;">4.000,00 €</div>
<div class="t" style="left:2143.00px;top:1362.54px;font-size:19.5px;color:#202326;font-weight:400;letter-spacing:0.25px;font-family:'Liberation Sans', sans-serif;-webkit-text-stroke:0.22px #202326;">760,00 €</div>
<div class="t" style="left:2483.20px;top:1362.54px;font-size:19.5px;color:#202326;font-weight:400;letter-spacing:0.25px;font-family:'Liberation Sans', sans-serif;-webkit-text-stroke:0.22px #202326;">4.760,00 €</div>
<div class="t" style="left:1802.00px;top:1430.94px;font-size:19.5px;color:#202326;font-weight:400;letter-spacing:0.25px;font-family:'Liberation Sans', sans-serif;-webkit-text-stroke:0.22px #202326;">Nachtragsursache</div>
<div style="position:absolute;left:2685.30px;top:1422.80px;width:131.40px;height:36.90px;background:#ffffff;border:1px solid #adb2b7;box-sizing:border-box;border-radius:3px;"></div>
<div class="t" style="left:2702.00px;top:1431.02px;font-size:20px;color:#202326;font-weight:400;letter-spacing:0px;font-family:'Liberation Sans', sans-serif;-webkit-text-stroke:0.72px #202326;">Bearbeiten</div>
<div style="position:absolute;left:1802.00px;top:1464.80px;width:1015.00px;height:1.20px;background:#e3e5e8;border-radius:0px;"></div>
<div class="t" style="left:1802.00px;top:1480.44px;font-size:19.5px;color:#202326;font-weight:400;letter-spacing:0.25px;font-family:'Liberation Sans', sans-serif;">Anspruchsgrundlage</div>
<div class="t" style="left:1802.00px;top:1512.84px;font-size:19.5px;color:#202326;font-weight:400;letter-spacing:0.25px;font-family:'Liberation Sans', sans-serif;-webkit-text-stroke:0.22px #202326;">Leistungsänderung</div>
</body></html>
